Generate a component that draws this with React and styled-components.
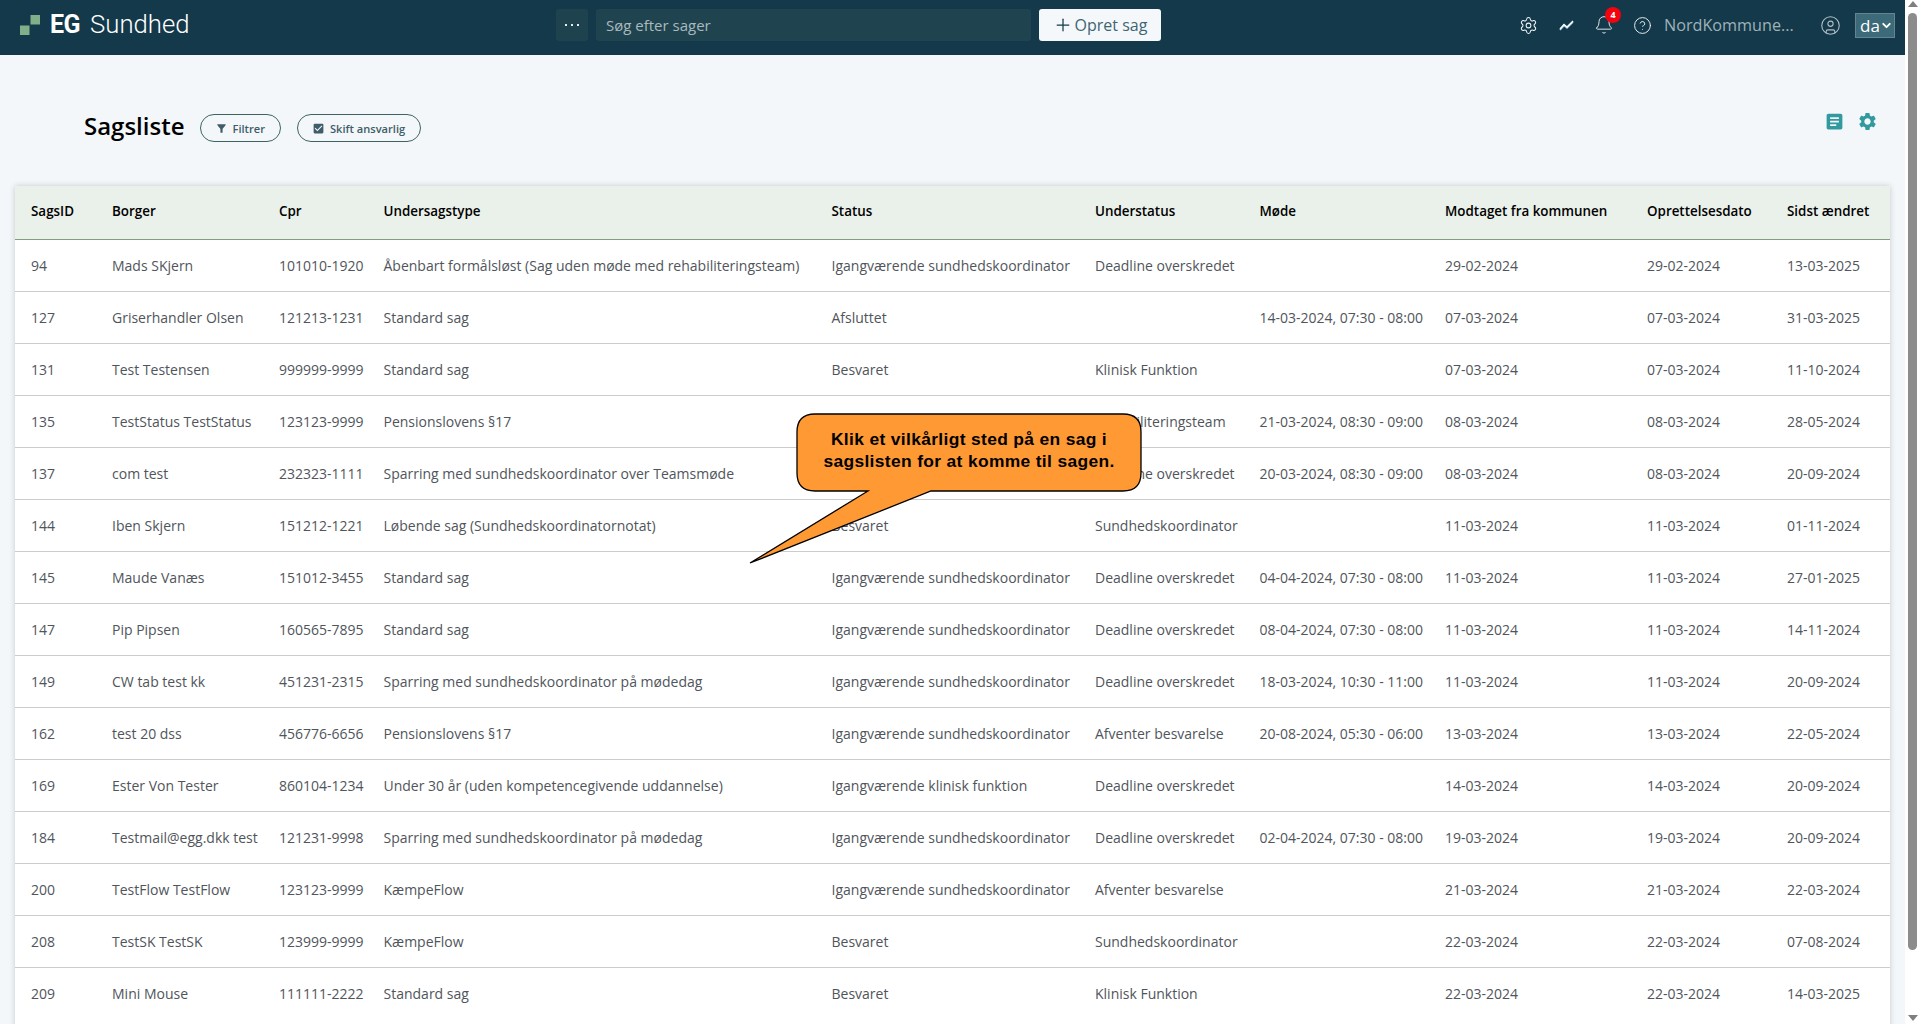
import React from "react";
import styled, { createGlobalStyle } from "styled-components";
import { Settings, Bell, CircleHelp, CircleUser, Plus, ChevronDown } from "lucide-react";
import { MdArticle, MdSettings, MdCheckBox, MdFilterAlt } from "react-icons/md";

const GlobalStyle = createGlobalStyle`
  html, body { margin: 0; padding: 0; height: 100%; overflow: hidden; }
  body { font-family: "Open Sans", "Liberation Sans", sans-serif; background: #fff; }
  #root { height: 100%; }
`;

const Shell = styled.div`
  display: flex;
  height: 1024px;
  overflow: hidden;
`;

const Page = styled.div`
  position: relative;
  flex: 1;
  min-width: 0;
  background: #f3f7fa;
  overflow: hidden;
`;

const ScrollTrack = styled.div`
  width: 15px;
  flex: none;
  background: #fff;
  display: flex;
  flex-direction: column;
  align-items: center;
  padding: 1px 0 3px;
  box-sizing: border-box;
`;

const ScrollArrow = styled.div`
  width: 0;
  height: 0;
  border-left: 5px solid transparent;
  border-right: 5px solid transparent;
  ${p => (p.$down ? "border-top: 6px solid #7f7f7f;" : "border-bottom: 6px solid #7f7f7f;")}
`;

const ScrollThumb = styled.div`
  width: 9px;
  height: 937px;
  margin: 6px 0 auto;
  background: #8c8c8c;
  border-radius: 5px;
`;

const Header = styled.header`
  height: 55px;
  box-sizing: border-box;
  background: #14394a;
  display: flex;
  align-items: center;
  padding: 0 10px 5px 0;
`;

const Brand = styled.div`
  width: 556px;
  flex: none;
  display: flex;
  align-items: center;
  padding-left: 20px;
  box-sizing: border-box;
`;

const LogoMark = styled.svg`
  width: 20px;
  height: 20px;
  margin-right: 10px;
`;

const LogoEg = styled.span`
  font-family: "Roboto", sans-serif;
  font-weight: 700;
  font-size: 25px;
  letter-spacing: -0.5px;
  color: #fff;
  margin-right: 10px;
  line-height: 1;
`;

const LogoName = styled.span`
  font-family: "Roboto", sans-serif;
  font-weight: 300;
  font-size: 25.7px;
  color: #fff;
  line-height: 1;
`;

const MoreButton = styled.div`
  width: 32px;
  height: 32px;
  border-radius: 3px;
  background: #1f424f;
  display: flex;
  align-items: center;
  justify-content: center;
  gap: 4px;
  margin-right: 8px;
`;

const Dot = styled.i`
  width: 2px;
  height: 2px;
  background: #e6ecef;
`;

const SearchBox = styled.div`
  width: 435px;
  height: 32px;
  border-radius: 3px;
  background: #20444f;
  color: #a9b9bf;
  font-size: 15px;
  line-height: 32px;
  padding-left: 10px;
  box-sizing: border-box;
  margin-right: 8px;
`;

const CreateButton = styled.div`
  width: 122px;
  height: 32px;
  border-radius: 3px;
  background: #f5f8fb;
  color: #3f6572;
  font-size: 16px;
  display: flex;
  align-items: center;
  justify-content: center;
  gap: 2px;
`;

const HeaderRight = styled.div`
  margin-left: auto;
  display: flex;
  align-items: center;
`;

const HeaderIcon = styled.div`
  position: relative;
  width: 38px;
  height: 32px;
  display: flex;
  align-items: center;
  justify-content: center;
  color: #eef3f5;
`;

const Badge = styled.span`
  position: absolute;
  top: -2px;
  left: 20px;
  width: 16px;
  height: 16px;
  border-radius: 50%;
  background: #f5020f;
  color: #fff;
  font-size: 9px;
  font-weight: 700;
  line-height: 16px;
  text-align: center;
`;

const TenantName = styled.span`
  width: 147px;
  margin-left: 3px;
  font-size: 16.2px;
  font-weight: 500;
  color: #9fb1b9;
  white-space: nowrap;
`;

const LangSelect = styled.div`
  width: 40px;
  height: 25px;
  margin-left: 6px;
  box-sizing: border-box;
  background: #3c6a78;
  border: 1px solid #66848f;
  color: #fff;
  font-size: 17px;
  display: flex;
  align-items: center;
  padding-left: 4px;
`;

const TitleBar = styled.div`
  height: 131px;
  box-sizing: border-box;
  display: flex;
  align-items: flex-start;
  padding: 54px 27px 0 84px;
`;

const Title = styled.h1`
  margin: 0 15px 0 0;
  font-size: 24px;
  font-weight: 600;
  line-height: 33px;
  color: #000;
`;

const PillButton = styled.div`
  height: 28px;
  margin: 5px 16px 0 0;
  padding: 0 15px 0 14px;
  box-sizing: border-box;
  border: 1px solid #3f6363;
  border-radius: 14px;
  background: #f3f7fa;
  color: #3f5c68;
  font-size: 11.1px;
  font-weight: 600;
  display: flex;
  align-items: center;
  gap: 5px;
`;

const PageTools = styled.div`
  margin-left: auto;
  margin-top: 2px;
  display: flex;
  align-items: center;
  gap: 12px;
  color: #329a9f;
`;

const TableCard = styled.div`
  margin: 0 15px;
  padding-bottom: 20px;
  background: #fff;
  box-shadow: 0 0 6px rgba(0, 0, 0, 0.18);
`;

const Table = styled.table`
  width: 100%;
  table-layout: fixed;
  border-collapse: collapse;
  font-size: 14px;
`;

const HeadCell = styled.th`
  height: 53px;
  padding: 0 0 2px 16px;
  box-sizing: border-box;
  background: #eaf0ea;
  border-bottom: 1px solid #7f9f7f;
  color: #000;
  font-size: 13.4px;
  font-weight: 600;
  text-align: left;
  white-space: nowrap;
`;

const Row = styled.tr`
  &:last-child td { border-bottom-color: transparent; }
`;

const Cell = styled.td`
  height: 52px;
  padding: 0 0 0 16px;
  box-sizing: border-box;
  border-bottom: 1px solid #ccc;
  color: #50555b;
  white-space: nowrap;
`;

const Callout = styled.div`
  position: absolute;
  left: 749px;
  top: 413px;
  width: 394px;
  height: 152px;
`;

const CalloutShape = styled.svg`
  position: absolute;
  inset: 0;
  width: 100%;
  height: 100%;
`;

const CalloutText = styled.div`
  position: absolute;
  left: 47px;
  top: 15px;
  width: 346px;
  text-align: center;
  font-family: "Liberation Sans", Arial, sans-serif;
  font-size: 17.4px;
  font-weight: 700;
  line-height: 22px;
  letter-spacing: 0.35px;
  color: #000;
`;

const columns = [81, 167, 104.5, 448, 263.5, 164.5, 185.5, 202, 140, 119];

const heads = ["SagsID", "Borger", "Cpr", "Undersagstype", "Status", "Understatus", "Møde", "Modtaget fra kommunen", "Oprettelsesdato", "Sidst ændret"];

const koord = "Igangværende sundhedskoordinator";
const dead = "Deadline overskredet";

const rows = [
  ["94", "Mads SKjern", "101010-1920", "Åbenbart formålsløst (Sag uden møde med rehabiliteringsteam)", koord, dead, "", "29-02-2024", "29-02-2024", "13-03-2025"],
  ["127", "Griserhandler Olsen", "121213-1231", "Standard sag", "Afsluttet", "", "14-03-2024, 07:30 - 08:00", "07-03-2024", "07-03-2024", "31-03-2025"],
  ["131", "Test Testensen", "999999-9999", "Standard sag", "Besvaret", "Klinisk Funktion", "", "07-03-2024", "07-03-2024", "11-10-2024"],
  ["135", "TestStatus TestStatus", "123123-9999", "Pensionslovens §17", "", "Rehabiliteringsteam", "21-03-2024, 08:30 - 09:00", "08-03-2024", "08-03-2024", "28-05-2024"],
  ["137", "com test", "232323-1111", "Sparring med sundhedskoordinator over Teamsmøde", "", dead, "20-03-2024, 08:30 - 09:00", "08-03-2024", "08-03-2024", "20-09-2024"],
  ["144", "Iben Skjern", "151212-1221", "Løbende sag (Sundhedskoordinatornotat)", "Besvaret", "Sundhedskoordinator", "", "11-03-2024", "11-03-2024", "01-11-2024"],
  ["145", "Maude Vanæs", "151012-3455", "Standard sag", koord, dead, "04-04-2024, 07:30 - 08:00", "11-03-2024", "11-03-2024", "27-01-2025"],
  ["147", "Pip Pipsen", "160565-7895", "Standard sag", koord, dead, "08-04-2024, 07:30 - 08:00", "11-03-2024", "11-03-2024", "14-11-2024"],
  ["149", "CW tab test kk", "451231-2315", "Sparring med sundhedskoordinator på mødedag", koord, dead, "18-03-2024, 10:30 - 11:00", "11-03-2024", "11-03-2024", "20-09-2024"],
  ["162", "test 20 dss", "456776-6656", "Pensionslovens §17", koord, "Afventer besvarelse", "20-08-2024, 05:30 - 06:00", "13-03-2024", "13-03-2024", "22-05-2024"],
  ["169", "Ester Von Tester", "860104-1234", "Under 30 år (uden kompetencegivende uddannelse)", "Igangværende klinisk funktion", dead, "", "14-03-2024", "14-03-2024", "20-09-2024"],
  ["184", "Testmail@egg.dkk test", "121231-9998", "Sparring med sundhedskoordinator på mødedag", koord, dead, "02-04-2024, 07:30 - 08:00", "19-03-2024", "19-03-2024", "20-09-2024"],
  ["200", "TestFlow TestFlow", "123123-9999", "KæmpeFlow", koord, "Afventer besvarelse", "", "21-03-2024", "21-03-2024", "22-03-2024"],
  ["208", "TestSK TestSK", "123999-9999", "KæmpeFlow", "Besvaret", "Sundhedskoordinator", "", "22-03-2024", "22-03-2024", "07-08-2024"],
  ["209", "Mini Mouse", "111111-2222", "Standard sag", "Besvaret", "Klinisk Funktion", "", "22-03-2024", "22-03-2024", "14-03-2025"],
];

const TrendIcon = () => (
  <svg width="15" height="11" viewBox="0 0 15 11" fill="none">
    <polyline points="1,9 5,4.5 8,7 14,1" stroke="#9fd0ee" strokeWidth="1.6" transform="translate(0 1)" />
    <polyline points="1,9 5,4.5 8,7 14,1" stroke="#fff" strokeWidth="1.4" />
  </svg>
);

export default function App() {
  return (
    <>
      <GlobalStyle />
      <Shell>
        <Page>
          <Header>
            <Brand>
              <LogoMark viewBox="0 0 20 20">
                <rect x="0" y="10.5" width="9.5" height="9.5" fill="#7fb08a" />
                <rect x="10.5" y="0" width="9.5" height="9.5" fill="#7fb08a" />
              </LogoMark>
              <LogoEg>EG</LogoEg>
              <LogoName>Sundhed</LogoName>
            </Brand>
            <MoreButton><Dot /><Dot /><Dot /></MoreButton>
            <SearchBox>Søg efter sager</SearchBox>
            <CreateButton><Plus size={20} strokeWidth={1.5} color="#14394a" />Opret sag</CreateButton>
            <HeaderRight>
              <HeaderIcon><Settings size={19} strokeWidth={1.3} /></HeaderIcon>
              <HeaderIcon><TrendIcon /></HeaderIcon>
              <HeaderIcon>
                <Bell size={20} strokeWidth={1.1} />
                <Badge>4</Badge>
              </HeaderIcon>
              <HeaderIcon><CircleHelp size={19} strokeWidth={1.2} /></HeaderIcon>
              <TenantName>NordKommune...</TenantName>
              <HeaderIcon><CircleUser size={21} strokeWidth={1.2} color="#b4c2c8" /></HeaderIcon>
              <LangSelect>da<ChevronDown size={13} strokeWidth={3.5} /></LangSelect>
            </HeaderRight>
          </Header>

          <TitleBar>
            <Title>Sagsliste</Title>
            <PillButton><MdFilterAlt size={13} />Filtrer</PillButton>
            <PillButton><MdCheckBox size={13} />Skift ansvarlig</PillButton>
            <PageTools>
              <MdArticle size={21} />
              <MdSettings size={21} />
            </PageTools>
          </TitleBar>

          <TableCard>
            <Table>
              <colgroup>
                {columns.map((w, i) => <col key={i} width={w} />)}
              </colgroup>
              <thead>
                <tr>{heads.map(h => <HeadCell key={h}>{h}</HeadCell>)}</tr>
              </thead>
              <tbody>
                {rows.map(r => (
                  <Row key={r[0]}>
                    {r.map((c, i) => <Cell key={i}>{c}</Cell>)}
                  </Row>
                ))}
              </tbody>
            </Table>
          </TableCard>

          <Callout>
            <CalloutShape viewBox="0 0 394 152">
              <path
                d="M66 1 H374 Q392 1 392 19 V60 Q392 78 374 78 H182 L1 150 L119 78 H66 Q48 78 48 60 V19 Q48 1 66 1 Z"
                fill="#ff9933"
                stroke="#000"
                strokeWidth="1.3"
              />
            </CalloutShape>
            <CalloutText>Klik et vilkårligt sted på en sag i<br />sagslisten for at komme til sagen.</CalloutText>
          </Callout>
        </Page>
        <ScrollTrack>
          <ScrollArrow />
          <ScrollThumb />
          <ScrollArrow $down />
        </ScrollTrack>
      </Shell>
    </>
  );
}
